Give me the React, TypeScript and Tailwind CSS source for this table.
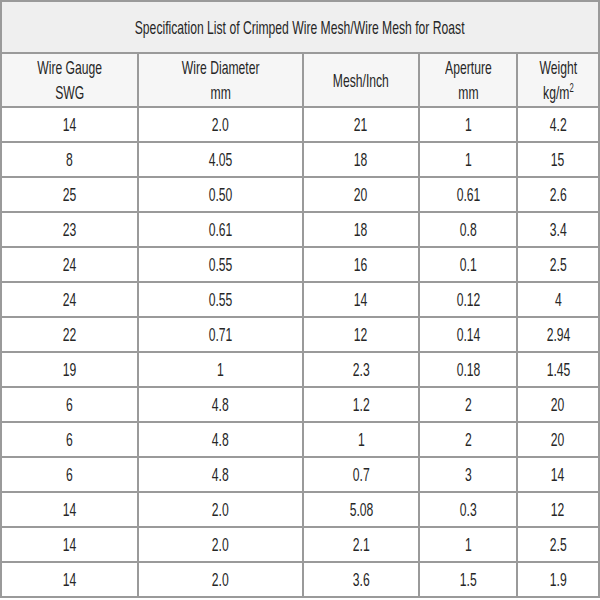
const rows: string[][] = [
  ["14", "2.0", "21", "1", "4.2"],
  ["8", "4.05", "18", "1", "15"],
  ["25", "0.50", "20", "0.61", "2.6"],
  ["23", "0.61", "18", "0.8", "3.4"],
  ["24", "0.55", "16", "0.1", "2.5"],
  ["24", "0.55", "14", "0.12", "4"],
  ["22", "0.71", "12", "0.14", "2.94"],
  ["19", "1", "2.3", "0.18", "1.45"],
  ["6", "4.8", "1.2", "2", "20"],
  ["6", "4.8", "1", "2", "20"],
  ["6", "4.8", "0.7", "3", "14"],
  ["14", "2.0", "5.08", "0.3", "12"],
  ["14", "2.0", "2.1", "1", "2.5"],
  ["14", "2.0", "3.6", "1.5", "1.9"],
];

const cell = "border-2 border-[#9a9a9a] text-center p-0 font-normal";

// the source font is a narrow grotesque; squeeze Liberation Sans to match
function Narrow({ children }: { children: React.ReactNode }) {
  return <span className="inline-block scale-x-[0.64] whitespace-nowrap">{children}</span>;
}

export default function App() {
  return (
    <div className="w-[600px] h-[600px] bg-white">
      <table
        className="w-[598px] border-collapse table-fixed text-[#262626] text-[19px] leading-[25px]"
        style={{ fontFamily: '"Liberation Sans", Arial, sans-serif' }}
      >
        <colgroup>
          <col className="w-[137px]" />
          <col className="w-[165px]" />
          <col className="w-[116px]" />
          <col className="w-[98px]" />
          <col className="w-[82px]" />
        </colgroup>
        <thead>
          <tr className="h-[52px] bg-[#efefef]">
            <th colSpan={5} className={cell}>
              <Narrow>Specification List of Crimped Wire Mesh/Wire Mesh for Roast</Narrow>
            </th>
          </tr>
          <tr className="h-[54px] bg-[#f6f6f6]">
            <th className={cell}><Narrow>Wire Gauge<br />SWG</Narrow></th>
            <th className={cell}><Narrow>Wire Diameter<br />mm</Narrow></th>
            <th className={cell}><Narrow>Mesh/Inch</Narrow></th>
            <th className={cell}><Narrow>Aperture<br />mm</Narrow></th>
            <th className={cell}>
              <Narrow>
                Weight<br />kg/m<sup className="text-[12px] -top-[7px]">2</sup>
              </Narrow>
            </th>
          </tr>
        </thead>
        <tbody>
          {rows.map((r, i) => (
            <tr key={i} className="h-[35px]">
              {r.map((v, j) => (
                <td key={j} className={cell}><Narrow>{v}</Narrow></td>
              ))}
            </tr>
          ))}
        </tbody>
      </table>
    </div>
  );
}
